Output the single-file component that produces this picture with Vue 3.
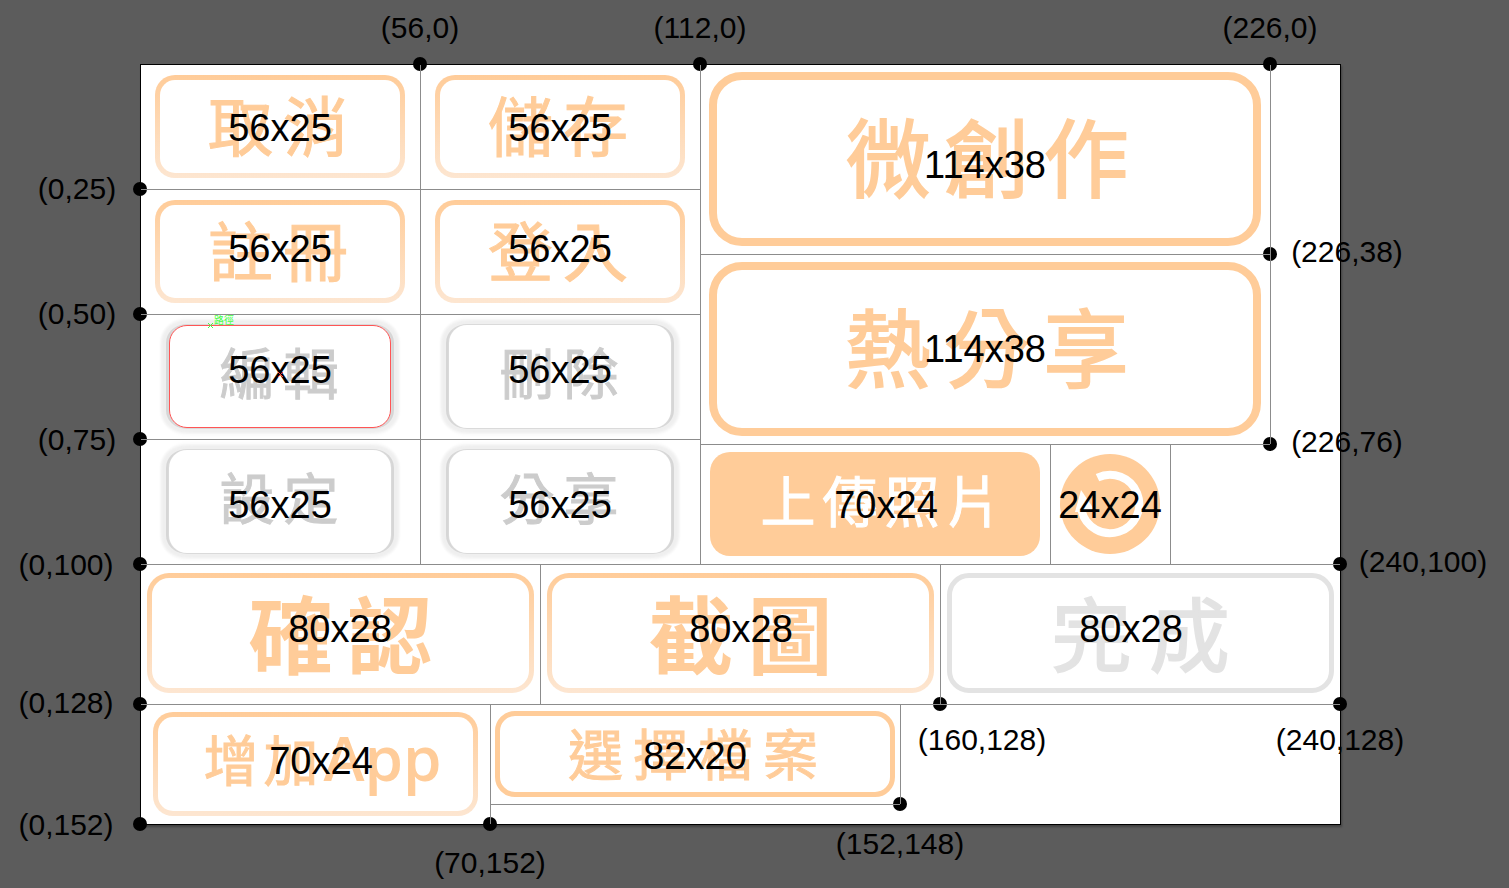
<script setup>
const SHEET = { w: 240, h: 152 }

const place = (p) => ({
  left: `${(p.x / SHEET.w) * 100}%`,
  top: `${(p.y / SHEET.h) * 100}%`,
})

const small = [
  { text: '取消', kind: 'soft' },
  { text: '儲存', kind: 'soft' },
  { text: '註冊', kind: 'soft' },
  { text: '登入', kind: 'soft' },
  { text: '編輯', kind: 'raised', selected: true },
  { text: '刪除', kind: 'raised' },
  { text: '設定', kind: 'raised' },
  { text: '分享', kind: 'raised' },
]
const big = ['微創作', '熱分享']
const wide = [
  { text: '確認', kind: 'soft heavy' },
  { text: '截圖', kind: 'soft heavy' },
  { text: '完成', kind: 'muted' },
]

const sizes = [
  { text: '56x25', x: 28, y: 12.8 },
  { text: '56x25', x: 84, y: 12.8 },
  { text: '56x25', x: 28, y: 37 },
  { text: '56x25', x: 84, y: 37 },
  { text: '56x25', x: 28, y: 61.2 },
  { text: '56x25', x: 84, y: 61.2 },
  { text: '56x25', x: 28, y: 88.2 },
  { text: '56x25', x: 84, y: 88.2 },
  { text: '114x38', x: 169, y: 20.2 },
  { text: '114x38', x: 169, y: 57 },
  { text: '70x24', x: 149.2, y: 88.2 },
  { text: '24x24', x: 194, y: 88.2 },
  { text: '80x28', x: 40, y: 113 },
  { text: '80x28', x: 120.2, y: 113 },
  { text: '80x28', x: 198.2, y: 113 },
  { text: '70x24', x: 36.2, y: 139.4 },
  { text: '82x20', x: 111, y: 138.4 },
]

const points = [
  { dot: { x: 56, y: 0 }, label: { x: 56, y: -7.2 } },
  { dot: { x: 112, y: 0 }, label: { x: 112, y: -7.2 } },
  { dot: { x: 226, y: 0 }, label: { x: 226, y: -7.2 } },
  { dot: { x: 0, y: 25 }, label: { x: -12.6, y: 25 } },
  { dot: { x: 0, y: 50 }, label: { x: -12.6, y: 50 } },
  { dot: { x: 0, y: 75 }, label: { x: -12.6, y: 75.2 } },
  { dot: { x: 0, y: 100 }, label: { x: -14.8, y: 100.2 } },
  { dot: { x: 0, y: 128 }, label: { x: -14.8, y: 127.8 } },
  { dot: { x: 0, y: 152 }, label: { x: -14.8, y: 152.2 } },
  { dot: { x: 226, y: 38 }, label: { x: 241.4, y: 37.6 } },
  { dot: { x: 226, y: 76 }, label: { x: 241.4, y: 75.6 } },
  { dot: { x: 240, y: 100 }, label: { x: 256.6, y: 99.6 } },
  { dot: { x: 160, y: 128 }, label: { x: 168.4, y: 135.2 } },
  { dot: { x: 240, y: 128 }, label: { x: 240, y: 135.2 } },
  { dot: { x: 152, y: 148 }, label: { x: 152, y: 156 } },
  { dot: { x: 70, y: 152 }, label: { x: 70, y: 159.8 } },
]
</script>

<template>
  <main class="desk">
    <div class="sheet">
      <div class="upper">
        <div class="small-grid">
          <div v-for="b in small" :key="b.text" class="cell" :class="`${b.kind}-cell`">
            <button type="button" class="btn" :class="[b.kind, { selected: b.selected }]">
              <span v-for="c in b.text" :key="c">{{ c }}</span>
            </button>
            <template v-if="b.selected">
              <span class="path-tag">路徑</span>
              <svg class="path-x" viewBox="0 0 5 5"><path d="M0 0L5 5M5 0L0 5" /></svg>
            </template>
          </div>
        </div>
        <div class="right">
          <div class="big-area">
            <div class="big-grid">
              <div v-for="t in big" :key="t" class="cell big-cell">
                <button type="button" class="btn big">
                  <span v-for="c in t" :key="c">{{ c }}</span>
                </button>
              </div>
            </div>
            <div class="rule-left"></div>
          </div>
          <div class="upload-row">
            <div class="cell upload-cell">
              <button type="button" class="btn filled">
                <span v-for="c in '上傳照片'" :key="c">{{ c }}</span>
              </button>
            </div>
            <div class="cell icon-cell">
              <button type="button" class="round" aria-label="24x24">
                <svg viewBox="0 0 100 100">
                  <path class="arc" d="M37.5 23.6A29.2 29.2 0 1 1 21.7 57" />
                  <path class="head" d="M21 36L36 58L15 58Z" />
                </svg>
              </button>
            </div>
            <div class="cell"></div>
          </div>
        </div>
      </div>
      <div class="wide-row">
        <div v-for="b in wide" :key="b.text" class="cell wide-cell">
          <button type="button" class="btn large" :class="b.kind">
            <span v-for="c in b.text" :key="c">{{ c }}</span>
          </button>
        </div>
      </div>
      <div class="last-row">
        <div class="cell add-cell">
          <button type="button" class="btn soft medium">
            <span>增</span><span>加</span><span class="latin">App</span>
          </button>
        </div>
        <div class="cell file-cell">
          <div class="file-box">
            <button type="button" class="btn file">
              <span v-for="c in '選擇檔案'" :key="c">{{ c }}</span>
            </button>
          </div>
        </div>
        <div class="cell rest"></div>
      </div>

      <i v-for="(p, i) in points" :key="`d${i}`" class="dot" :style="place(p.dot)"></i>
      <span v-for="(p, i) in points" :key="`p${i}`" class="coord" :style="place(p.label)">({{ p.dot.x }},{{ p.dot.y }})</span>
      <span v-for="(s, i) in sizes" :key="`s${i}`" class="size" :style="place(s)">{{ s.text }}</span>
      <svg class="center-x" viewBox="0 0 5 5"><path d="M0 0L5 5M5 0L0 5" /></svg>
    </div>
  </main>
</template>

<style>
body {
  background: #5c5c5c;
}
</style>

<style scoped>
.desk {
  box-sizing: border-box;
  min-height: 100vh;
  padding: 64px 169px 63px 140px;
  overflow: hidden;
  background: #5c5c5c;
  color: #000;
  font-family: "Liberation Sans", Arial, sans-serif;
}
.desk * {
  box-sizing: border-box;
}
.sheet {
  position: relative;
  z-index: 0;
  background: #fff;
}
.sheet::after {
  content: "";
  position: absolute;
  inset: 0 -1px -1px 0;
  z-index: 3;
  border: 1px solid #000;
  box-shadow: 1px 2px 2px rgba(0, 0, 0, 0.3);
  pointer-events: none;
}
.upper {
  display: grid;
  grid-template-columns: 112fr 128fr;
}
.small-grid {
  display: grid;
  grid-template-columns: 1fr 1fr;
  grid-auto-rows: 125px;
}
.big-area {
  display: grid;
  grid-template-columns: 114fr 14fr;
}
.big-grid {
  display: grid;
  grid-auto-rows: 190px;
}
.upload-row {
  display: grid;
  grid-template-columns: 70fr 24fr 20fr 14fr;
  grid-auto-rows: 120px;
}
.wide-row {
  display: grid;
  grid-template-columns: repeat(3, 1fr);
  grid-auto-rows: 140px;
}
.last-row {
  display: grid;
  grid-template-columns: 70fr 82fr 88fr;
  grid-auto-rows: 120px;
}
.cell {
  position: relative;
  z-index: 2;
  display: flex;
  min-width: 0;
  border-top: 1px solid #8c8c8c;
  border-left: 1px solid #8c8c8c;
}
.rule-left {
  position: relative;
  z-index: 2;
  border-left: 1px solid #8c8c8c;
}
.soft-cell { padding: 10px 15px 11px 14px; }
.raised-cell { padding: 10px 29px 11px 28px; }
.big-cell { padding: 7px 9px 8px 8px; }
.upload-cell { padding: 7px 10px 8px 9px; }
.icon-cell { padding: 9px 10px 10px 9px; }
.wide-cell { padding: 8px 6px 11px 6px; }
.add-cell { padding: 7px 12px 8px 12px; }
.rest {
  height: 100px;
}
.file-cell {
  align-items: flex-start;
}
.file-box {
  display: flex;
  flex: 1;
  height: 100px;
  padding: 6px 5px 7px 4px;
  border-bottom: 1px solid #8c8c8c;
}
.btn {
  display: flex;
  flex: 1;
  align-items: center;
  justify-content: center;
  min-width: 0;
  margin: 0;
  padding: 0 4px 6px 0;
  border: 5px solid #fc9;
  border-radius: 20px;
  background: #fff;
  color: #fc9;
  font: 400 65px/1 "Noto Sans CJK TC", sans-serif;
  gap: 10px;
  -webkit-text-stroke: 1px currentColor;
}
.soft {
  border-color: transparent;
  background:
    linear-gradient(#fff, #fff) padding-box,
    linear-gradient(#fc9, #fde6d1) border-box;
}
.raised {
  padding: 0 2px 12px 0;
  border: 0;
  border-radius: 18px;
  color: #ccc;
  font-size: 55px;
  gap: 9px;
  box-shadow:
    0 0 0 1px #dadada,
    3px 0 0 #d6d6d6,
    -3px 0 0 #d6d6d6,
    4px 0 3px 4px #efefef,
    -4px 0 3px 4px #efefef,
    0 0 4px 6px #f4f4f4;
}
.selected {
  border: 1px solid #f55;
}
.big {
  padding: 0 0 12px 4px;
  border-width: 8px;
  border-radius: 33px;
  font-size: 85px;
  gap: 14px;
  -webkit-text-stroke-width: 2px;
}
.large {
  padding: 0 0 6px;
  border-radius: 22px;
  font-size: 85px;
  gap: 14px;
}
.heavy {
  font-weight: 700;
  -webkit-text-stroke-width: 0;
}
.muted {
  border-color: #e3e3e3;
  color: #e3e3e3;
  font-size: 80px;
  gap: 18px;
  -webkit-text-stroke-width: 2px;
}
.filled {
  padding: 0 0 12px 12px;
  border: 0;
  background: #fc9;
  color: #fff;
  font-size: 55px;
  gap: 7px;
}
.medium {
  padding: 0 0 14px 14px;
  font-size: 55px;
  gap: 5px;
}
.latin {
  font: 600 62px/1 "Open Sans", sans-serif;
  -webkit-text-stroke-width: 0;
}
.file {
  padding: 0 4px 6px 0;
  font-size: 55px;
  gap: 10px;
}
.round {
  flex: 1;
  margin: 0;
  padding: 0;
  border: 0;
  background: none;
}
.round svg {
  display: block;
  width: 100px;
  height: 100px;
  margin: 0 auto;
  border-radius: 50%;
  background: #fc9;
}
.arc {
  fill: none;
  stroke: #fff;
  stroke-width: 8;
}
.head {
  fill: #fff;
}
.path-tag {
  position: absolute;
  left: 73px;
  top: 0;
  color: #4f4;
  font: 10px/10px "Noto Sans CJK TC", sans-serif;
}
.path-x,
.center-x {
  position: absolute;
  width: 5px;
  height: 5px;
  fill: none;
  stroke: #4f4;
}
.path-x {
  left: 67px;
  top: 8px;
}
.center-x {
  z-index: 5;
  left: 11.5%;
  top: 40.5%;
  stroke: #f33;
}
.dot {
  position: absolute;
  z-index: 1;
  width: 14px;
  height: 14px;
  margin: -7px 0 0 -7px;
  border-radius: 50%;
  background: #000;
}
.coord,
.size {
  position: absolute;
  z-index: 4;
  transform: translate(-50%, -50%);
  line-height: 1;
  white-space: nowrap;
  pointer-events: none;
}
.coord {
  font-size: 30px;
}
.size {
  font-size: 38px;
}
</style>
